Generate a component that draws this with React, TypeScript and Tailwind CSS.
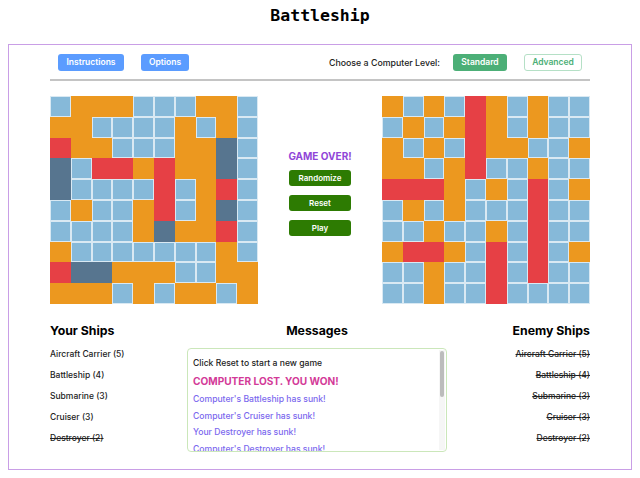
import React from 'react';

type Cell = 'B' | 'O' | 'R' | 'D';

// board snapshots at game end
const playerBoard: string[] = [
  'BOOOBBBOOB',
  'OOBBBBOBOB',
  'ROOBBBOODB',
  'DBRROROODB',
  'DBBBBRBORB',
  'BOBBORBODB',
  'BBBBODOORB',
  'OBBBBBBBOB',
  'RDDOOOBBOO',
  'OOOBOBOOBO',
];

const enemyBoard: string[] = [
  'OBOBROBOBB',
  'BOBOROBOBB',
  'OBOBROOBBO',
  'OOBORBBOBB',
  'RRROBOBRBO',
  'BOBOBBBRBB',
  'BBOBBOBRBB',
  'ORROBRBRBO',
  'BBOBBRBRBB',
  'BBOBBRBBBB',
];

const cellClass: Record<Cell, string> = {
  B: 'bg-[#86b9d9] border border-[#d9e9f3]',
  O: 'bg-[#ec981f] border border-[#ec981f]',
  R: 'bg-[#e64045] border border-[#e64045]',
  D: 'bg-[#57758f] border border-[#57758f]',
};

const Board: React.FC<{ rows: string[] }> = ({ rows }) => (
  <div className="grid grid-cols-10 grid-rows-10 w-[208px] h-[208px]">
    {rows.flatMap((row, r) =>
      row.split('').map((c, i) => <div key={`${r}-${i}`} className={cellClass[c as Cell]} />)
    )}
  </div>
);

const ships = [
  { name: 'Aircraft Carrier', size: 5 },
  { name: 'Battleship', size: 4 },
  { name: 'Submarine', size: 3 },
  { name: 'Cruiser', size: 3 },
  { name: 'Destroyer', size: 2 },
];

const yourSunk = ['Destroyer'];

const messages = [
  "Computer's Battleship has sunk!",
  "Computer's Cruiser has sunk!",
  'Your Destroyer has sunk!',
  "Computer's Destroyer has sunk!",
];

export default function App() {
  return (
    <div className="min-h-screen bg-white font-['Inter',sans-serif] text-[#222]">
      <h1 className="h-[44px] pt-[5px] text-center font-['DejaVu_Sans_Mono',monospace] text-[16.5px] leading-[22px] font-bold text-black">
        Battleship
      </h1>

      <div className="mx-2 h-[426px] border border-[#c99ee6] px-[41px]">
        {/* top controls */}
        <div className="mt-[9px] flex h-[17px] items-center px-2">
          <button className="h-[17px] w-[66px] rounded-[3px] bg-[#5b9cff] text-[8.5px] font-semibold text-white">
            Instructions
          </button>
          <button className="ml-[17px] h-[17px] w-[48px] rounded-[3px] bg-[#5b9cff] text-[8.5px] font-semibold text-white">
            Options
          </button>
          <span className="ml-auto text-[8.8px] font-medium text-[#222]">Choose a Computer Level:</span>
          <button className="ml-[13px] h-[17px] w-[54px] rounded-[3px] bg-[#4caf77] text-[8.5px] font-semibold text-white">
            Standard
          </button>
          <button className="ml-[17px] h-[17px] w-[58px] rounded-[3px] border border-[#b5e0c6] bg-white text-[8.5px] font-semibold text-[#4caf77]">
            Advanced
          </button>
        </div>
        <div className="mt-2 h-[2px] bg-[#c4c4c4]" />

        {/* boards */}
        <div className="mt-[15px] flex items-start justify-between">
          <Board rows={playerBoard} />
          <div className="flex w-[62px] flex-col items-center pt-[54px]">
            <div className="whitespace-nowrap text-[10px] leading-[12px] font-bold text-[#9146d8]">GAME OVER!</div>
            <button className="mt-2 h-4 w-[62px] rounded-[3px] bg-[#2d7b02] text-[8px] font-semibold text-white">
              Randomize
            </button>
            <button className="mt-[9px] h-4 w-[62px] rounded-[3px] bg-[#2d7b02] text-[8px] font-semibold text-white">
              Reset
            </button>
            <button className="mt-[9px] h-4 w-[62px] rounded-[3px] bg-[#2d7b02] text-[8px] font-semibold text-white">
              Play
            </button>
          </div>
          <Board rows={enemyBoard} />
        </div>

        {/* ships + messages */}
        <div className="mt-[19px] flex items-start justify-between">
          <div className="w-[117px]">
            <h2 className="text-[12.3px] leading-[16px] font-bold text-black">Your Ships</h2>
            <ul className="mt-[9px] flex flex-col gap-[9px] text-[8.5px] leading-[12px] font-medium">
              {ships.map((s) => (
                <li key={s.name} className={yourSunk.includes(s.name) ? 'line-through' : ''}>
                  {s.name} ({s.size})
                </li>
              ))}
            </ul>
          </div>

          <div className="flex flex-col items-center">
            <h2 className="text-[12.3px] leading-[16px] font-bold text-black">Messages</h2>
            <div className="relative mt-[9px] h-[104px] w-[260px] overflow-hidden rounded-[4px] border border-[#cbe7ba] pl-[5px] pt-[8px]">
              <div className="whitespace-nowrap text-[8.6px] leading-[12px] font-medium text-[#222]">Click Reset to start a new game</div>
              <div className="mt-[6px] whitespace-nowrap text-[10.1px] leading-[13px] font-bold text-[#d33a98]">COMPUTER LOST. YOU WON!</div>
              <div className="mt-[5px] flex flex-col gap-[4.5px] whitespace-nowrap text-[8.6px] leading-[12px] font-medium text-[#7b68ee]">
                {messages.map((m) => (
                  <div key={m}>{m}</div>
                ))}
              </div>
              <div className="absolute right-[1px] top-[1px] h-[100px] w-[6px] bg-[#f6f6f6]">
                <div className="mx-auto mt-[1px] h-[46px] w-[4px] rounded-full bg-[#bcbcbc]" />
              </div>
            </div>
          </div>

          <div className="flex w-[123px] flex-col items-end">
            <h2 className="text-[12.3px] leading-[16px] font-bold text-black">Enemy Ships</h2>
            <ul className="mt-[9px] flex flex-col items-end gap-[9px] text-[8.5px] leading-[12px] font-medium">
              {ships.map((s) => (
                <li key={s.name} className="line-through">
                  {s.name} ({s.size})
                </li>
              ))}
            </ul>
          </div>
        </div>
      </div>
    </div>
  );
}
